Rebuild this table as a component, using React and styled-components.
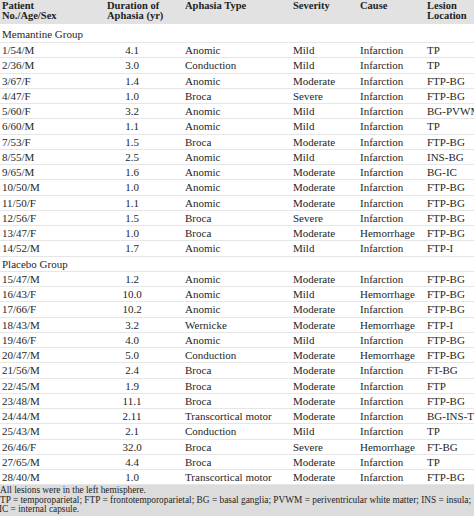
import React from "react";
import styled, { createGlobalStyle } from "styled-components";

const GlobalStyle = createGlobalStyle`
  html, body {
    margin: 0;
    padding: 0;
    background: #ffffff;
  }
  body {
    font-family: "Liberation Serif", "Times New Roman", serif;
    color: #262626;
  }
`;

const memantine = [
  ["1/54/M", "4.1", "Anomic", "Mild", "Infarction", "TP"],
  ["2/36/M", "3.0", "Conduction", "Mild", "Infarction", "TP"],
  ["3/67/F", "1.4", "Anomic", "Moderate", "Infarction", "FTP-BG"],
  ["4/47/F", "1.0", "Broca", "Severe", "Infarction", "FTP-BG"],
  ["5/60/F", "3.2", "Anomic", "Mild", "Infarction", "BG-PVWM"],
  ["6/60/M", "1.1", "Anomic", "Mild", "Infarction", "TP"],
  ["7/53/F", "1.5", "Broca", "Moderate", "Infarction", "FTP-BG"],
  ["8/55/M", "2.5", "Anomic", "Mild", "Infarction", "INS-BG"],
  ["9/65/M", "1.6", "Anomic", "Moderate", "Infarction", "BG-IC"],
  ["10/50/M", "1.0", "Anomic", "Moderate", "Infarction", "FTP-BG"],
  ["11/50/F", "1.1", "Anomic", "Moderate", "Infarction", "FTP-BG"],
  ["12/56/F", "1.5", "Broca", "Severe", "Infarction", "FTP-BG"],
  ["13/47/F", "1.0", "Broca", "Moderate", "Hemorrhage", "FTP-BG"],
  ["14/52/M", "1.7", "Anomic", "Mild", "Infarction", "FTP-I"],
];

const placebo = [
  ["15/47/M", "1.2", "Anomic", "Moderate", "Infarction", "FTP-BG"],
  ["16/43/F", "10.0", "Anomic", "Mild", "Hemorrhage", "FTP-BG"],
  ["17/66/F", "10.2", "Anomic", "Moderate", "Infarction", "FTP-BG"],
  ["18/43/M", "3.2", "Wernicke", "Moderate", "Hemorrhage", "FTP-I"],
  ["19/46/F", "4.0", "Anomic", "Mild", "Infarction", "FTP-BG"],
  ["20/47/M", "5.0", "Conduction", "Moderate", "Hemorrhage", "FTP-BG"],
  ["21/56/M", "2.4", "Broca", "Moderate", "Infarction", "FT-BG"],
  ["22/45/M", "1.9", "Broca", "Moderate", "Infarction", "FTP"],
  ["23/48/M", "11.1", "Broca", "Moderate", "Infarction", "FTP-BG"],
  ["24/44/M", "2.11", "Transcortical motor", "Moderate", "Infarction", "BG-INS-TFP"],
  ["25/43/M", "2.1", "Conduction", "Mild", "Infarction", "TP"],
  ["26/46/F", "32.0", "Broca", "Severe", "Hemorrhage", "FT-BG"],
  ["27/65/M", "4.4", "Broca", "Moderate", "Infarction", "TP"],
  ["28/40/M", "1.0", "Transcortical motor", "Moderate", "Infarction", "FTP-BG"],
];

const cols = "105px 78px 108px 67px 67px 1fr";

const Table = styled.div`
  width: 474px;
  height: 516px;
  overflow: hidden;
  display: flex;
  flex-direction: column;
`;

const HeadRow = styled.div`
  display: grid;
  grid-template-columns: ${cols};
  flex: 0 0 24px;
  background: #e2e2e2;
  font-weight: bold;
  font-size: 10.5px;
  line-height: 10px;
  color: #1e1e1e;
  box-sizing: border-box;
  padding-top: 1px;
`;

const Row = styled.div`
  display: grid;
  grid-template-columns: ${cols};
  flex: 0 0 ${({ tall }) => (tall ? "19px" : "15.25px")};
  box-sizing: border-box;
  border-bottom: 1px solid #e6e6e6;
  align-items: ${({ tall }) => (tall ? "end" : "center")};
  padding-top: 1px;
  padding-bottom: ${({ tall }) => (tall ? "1px" : "0")};
  font-size: 11px;
  line-height: 13px;
  white-space: nowrap;
`;

const Cell = styled.div`
  padding-left: 2px;
  white-space: nowrap;
`;

const Num = styled.div`
  width: 50px;
  margin-left: 2px;
  text-align: center;
`;

const GroupCell = styled.div`
  grid-column: 1 / -1;
  padding-left: 2px;
`;

const Footer = styled.div`
  flex: 1 0 auto;
  background: #dcdcdc;
  font-size: 9.3px;
  line-height: 9.6px;
  padding-top: 1px;
  color: #1e1e1e;
`;

const Note = styled.div`
  width: 471px;
  white-space: nowrap;
  text-align: ${({ justify }) => (justify ? "justify" : "left")};
  text-align-last: ${({ justify }) => (justify ? "justify" : "left")};
  margin-left: ${({ shift }) => (shift ? "-1px" : "0")};
`;

const DataRow = ({ r }) => (
  <Row>
    <Cell>{r[0]}</Cell>
    <Num>{r[1]}</Num>
    <Cell>{r[2]}</Cell>
    <Cell>{r[3]}</Cell>
    <Cell>{r[4]}</Cell>
    <Cell>{r[5]}</Cell>
  </Row>
);

export default function App() {
  return (
    <>
      <GlobalStyle />
      <Table>
        <HeadRow>
          <Cell>Patient<br />No./Age/Sex</Cell>
          <Cell>Duration of<br />Aphasia (yr)</Cell>
          <Cell>Aphasia Type</Cell>
          <Cell>Severity</Cell>
          <Cell>Cause</Cell>
          <Cell>Lesion<br />Location</Cell>
        </HeadRow>
        <Row tall>
          <GroupCell>Memantine Group</GroupCell>
        </Row>
        {memantine.map((r) => (
          <DataRow key={r[0]} r={r} />
        ))}
        <Row>
          <GroupCell>Placebo Group</GroupCell>
        </Row>
        {placebo.map((r) => (
          <DataRow key={r[0]} r={r} />
        ))}
        <Footer>
          <Note>All lesions were in the left hemisphere.</Note>
          <Note justify>
            TP = temporoparietal; FTP = frontotemporoparietal; BG = basal ganglia; PVWM = periventricular white matter; INS = insula;
          </Note>
          <Note shift>IC = internal capsule.</Note>
        </Footer>
      </Table>
    </>
  );
}
